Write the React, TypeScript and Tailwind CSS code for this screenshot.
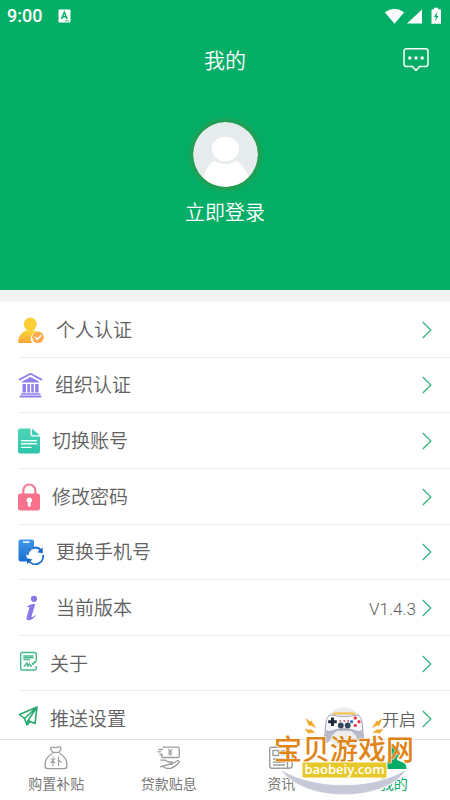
import React from "react";

type RowProps = { icon: React.ReactNode; label: string; value?: string };

const UserIcon = () => (
  <svg width="26" height="28" viewBox="0 0 26 28" aria-hidden="true">
    <defs>
      <linearGradient id="userFill" x1="0" y1="0" x2="0" y2="1">
        <stop offset="0" stopColor="#fdd835" />
        <stop offset="1" stopColor="#fba53c" />
      </linearGradient>
    </defs>
    <path d="M1.6 27C.5 27 0 26.400.1 25.400C.8 19.500 4.200 15.400 9 14.200H15.500C17 14.600 18 15 19 15.700A6.800 6.800 0 0 0 14.600 27Z" fill="url(#userFill)" />
    <ellipse cx="12.300" cy="8.300" rx="6.400" ry="6.800" fill="#fdcf36" />
    <circle cx="20" cy="21.300" r="5.800" fill="#fba94a" />
    <path d="M17.200 21.300L19.400 23.400L23 19.500" fill="none" stroke="#fff" strokeWidth="1.500" strokeLinecap="round" strokeLinejoin="round" />
  </svg>
);

const BankIcon = () => (
  <svg width="25" height="26" viewBox="0 0 25 26" fill="#8f80ea" aria-hidden="true">
    <path d="M1.500 7.600L12.500 1.800L23.500 7.600" fill="none" stroke="#8f80ea" strokeWidth="1.800" strokeLinecap="round" strokeLinejoin="round" />
    <path d="M4 9.600L12.500 5L21 9.600V10.600H4Z" />
    <path d="M4.500 12H8V20.500H4.500ZM9.300 12H11.900V20.500H9.300ZM13.200 12H15.800V20.500H13.200ZM17.100 12H20.600V20.500H17.100Z" />
    <rect x="3" y="21.200" width="19.500" height="1.500" />
    <rect x="1.500" y="23.500" width="22" height="1.900" rx=".8" />
  </svg>
);

const DocumentIcon = () => (
  <svg width="22" height="26" viewBox="0 0 22 26" aria-hidden="true">
    <defs>
      <linearGradient id="docFill" x1="0" y1="0" x2="0" y2="1">
        <stop offset="0" stopColor="#4fd5b8" />
        <stop offset="1" stopColor="#2ec3aa" />
      </linearGradient>
    </defs>
    <path d="M2 .5H12.500V6.500Q12.500 8.500 14.500 8.500H22V23.500Q22 25.500 20 25.500H2Q0 25.500 0 23.500V2.500Q0 .5 2 .5Z" fill="url(#docFill)" />
    <path d="M14 .8L21.700 7.200H15.200Q14 7.200 14 6Z" fill="#3fceb2" />
    <path d="M3.500 12.700H18.500M3.500 15.800H18.500M3.500 19.400H13" stroke="#e9fffa" strokeWidth="1.400" strokeLinecap="round" />
  </svg>
);

const LockIcon = () => (
  <svg width="22" height="28" viewBox="0 0 22 28" aria-hidden="true">
    <path d="M5.300 12V7.500A6 6 0 0 1 17.300 7.500V12" fill="none" stroke="#ef7d95" strokeWidth="2.200" />
    <rect x="0" y="10.500" width="22" height="17" rx="2.500" fill="#f7708c" />
    <circle cx="11.300" cy="17.200" r="2.700" fill="#fff" />
    <path d="M10 18H12.600L13 23Q11.300 24.300 9.700 23Z" fill="#fff" />
  </svg>
);

const PhoneSwapIcon = () => (
  <svg width="26" height="26" viewBox="0 0 26 26" aria-hidden="true">
    <defs>
      <linearGradient id="phoneFill" x1="0" y1="0" x2="0" y2="1">
        <stop offset="0" stopColor="#3f97ec" />
        <stop offset="1" stopColor="#1e6fcf" />
      </linearGradient>
    </defs>
    <rect x=".5" y=".5" width="15.500" height="22" rx="2" fill="url(#phoneFill)" />
    <rect x="5" y="2.300" width="6.500" height="1.500" fill="#fff" />
    <circle cx="16.800" cy="16.500" r="8.400" fill="#fff" />
    <g fill="none" stroke="#2476d2" strokeWidth="2">
      <path d="M9.500 16A7.700 7.700 0 0 1 23.500 12" />
      <path d="M25 16A7.900 7.900 0 0 1 10.500 21.500" />
    </g>
    <path d="M24.700 8.500V14.200L19.200 13.300ZM9 25V19.300L14.500 20.500Z" fill="#1765c0" />
  </svg>
);

const InfoIcon = () => (
  <svg width="26" height="26" viewBox="0 0 26 26" fill="#8a75ea" aria-hidden="true">
    <circle cx="16" cy="3.800" r="3.100" />
    <path d="M9 11.500Q12.500 9 17.300 8.800L13.600 21.200Q13.300 22.600 14.800 21.900L17.300 20L17.600 20.800Q13.700 25.500 10.200 25.300Q8 25 8.700 21.900L11.500 12.500Q11.700 11.500 9 12.200Z" />
  </svg>
);

const AboutIcon = () => (
  <svg width="20" height="26" viewBox="0 0 20 26" fill="none" stroke="#45b98a" strokeWidth="1.400" aria-hidden="true">
    <path d="M18.300 9V3Q18.300 1.500 16.800 1.500H4.200Q2.700 1.500 2.700 3V17.500Q2.700 19 4.200 19H16.800Q18.300 19 18.300 17.500V15" />
    <path d="M5.300 5H15.500M5.300 6.800H15.500M5.300 8.600H12" />
    <path d="M6 15.500L9 12L9.800 15L11.500 13L12.500 15H14" />
    <path d="M14.200 13.500L18.500 9.600" strokeWidth="1.800" />
  </svg>
);

const PlaneIcon = () => (
  <svg width="20" height="28" viewBox="0 0 20 28" fill="none" stroke="#27a970" strokeWidth="1.600" strokeLinejoin="round" aria-hidden="true">
    <path d="M19 2L1.500 9.500L6.500 13.500L19 2L17 18.500L10 15.500Z" />
    <path d="M6.500 13.500L9 20L10 15.500M9 20L12 16.600" />
  </svg>
);

const Chevron = () => (
  <svg width="10" height="18" viewBox="0 0 10 18" fill="none" stroke="#3db785" strokeWidth="1.400" aria-hidden="true">
    <path d="M.8 1L8.800 9L.8 17" />
  </svg>
);

const rows: RowProps[] = [
  { icon: <UserIcon />, label: "个人认证" },
  { icon: <BankIcon />, label: "组织认证" },
  { icon: <DocumentIcon />, label: "切换账号" },
  { icon: <LockIcon />, label: "修改密码" },
  { icon: <PhoneSwapIcon />, label: "更换手机号" },
  { icon: <InfoIcon />, label: "当前版本", value: "V1.4.3" },
  { icon: <AboutIcon />, label: "关于" },
  { icon: <PlaneIcon />, label: "推送设置", value: "开启" },
];

function Row({ icon, label, value }: RowProps) {
  return (
    <li className="ml-[18px] flex border-b border-[#ededed]">
      <button type="button" className="flex flex-1 items-center pt-px pr-[18px] text-left font-[350] text-[#606060]">
        {icon}
        <span className="ml-3 flex-1 pt-0.5 text-[19px] leading-6">{label}</span>
        {value && <span className="mr-1.5 pt-0.5 text-[17px] leading-6">{value}</span>}
        <Chevron />
      </button>
    </li>
  );
}

const BagIcon = () => (
  <svg width="26" height="24" viewBox="0 0 26 24" fill="none" stroke="#9b9d9d" strokeWidth="1.300" aria-hidden="true">
    <path d="M9.500 6.300C8.500 4 7.200 3 8 1.500C9.500 .3 10.500 1.900 12.300 1.700C14 1.600 15.500 .2 17.600 1.200C19 2.500 17 4 16.300 6.300Z" strokeLinejoin="round" />
    <path d="M9.500 7.500C5.500 9.500 2 14 2 19.500Q2 22.700 5 22.700H21Q24 22.700 24 19.500C24 14 20.500 9.500 16.500 7.500" />
    <path d="M9.700 10.500L10.700 11.700M7.500 13H11.500L7.500 17M10 14.500V20M10.300 15.500L12 17M15.500 10.500V20M15.500 14L18.500 16.500" strokeWidth="1.100" />
  </svg>
);

const LoanIcon = () => (
  <svg width="26" height="24" viewBox="0 0 26 24" fill="none" stroke="#9b9d9d" strokeWidth="1.300" strokeLinejoin="round" aria-hidden="true">
    <path d="M6.500 1.200H22Q23.200 1.200 23.200 2.400V10.500Q23.200 11.500 22 11.500H7Q5.700 11.500 5.700 10.300V8.500M2.500 3.500H7M1.500 5.800H5M3.500 8.500H7" />
    <path d="M12.200 3L14.200 5.500L16.200 3M14.200 5.500V10M12 6H16.500M12 8H16.500" strokeWidth="1.100" />
    <path d="M4.500 14.200H9L12.500 16H16Q17.500 17.500 15.700 18.300H11.500M16.500 17.500L21.500 14.700Q24 14.500 23 16.500Q19.500 20.500 15 22.300H10L7.500 20.700H4.500Z" />
  </svg>
);

const NewsIcon = () => (
  <svg width="26" height="24" viewBox="0 0 26 24" fill="none" stroke="#9b9d9d" strokeWidth="1.400" aria-hidden="true">
    <path d="M19.500 21.500V3Q19.500 1.200 17.700 1.200H3.500Q1.700 1.200 1.700 3V20Q1.700 22.300 4 22.300H21Q24.200 22.300 24.200 19.500V7H19.500" />
    <rect x="5" y="4.500" width="5.500" height="5" />
    <path d="M13 5H17M13 8.500H17M5 13H17M5 16H17M5 19H17" />
  </svg>
);

const MeIcon = () => (
  <svg width="26" height="24" viewBox="0 0 26 24" fill="#06ad66" aria-hidden="true">
    <ellipse cx="13" cy="6.500" rx="5.600" ry="6.200" />
    <path d="M10 11H16V14L23 17Q25.500 18.500 25.500 23H.5Q.5 18.500 3 17L10 14Z" />
  </svg>
);

const tabs = [
  { label: "购置补贴", icon: <BagIcon /> },
  { label: "贷款贴息", icon: <LoanIcon /> },
  { label: "资讯", icon: <NewsIcon /> },
  { label: "我的", icon: <MeIcon />, active: true },
];

const Bolts = () => (
  <path d="M34 14.500L38.300 18.200L39 16.800L43.500 23.500L38 20.800L37.300 22.200ZM33 25L37.700 26.200L38.300 25.200L43 28.500L37.700 28.500L37 29.800Z" fill="#f2a51f" stroke="#f2a51f" strokeWidth=".5" />
);

function SiteBadge() {
  return (
    <svg className="pointer-events-none absolute right-[34px] bottom-0" width="144" height="96" viewBox="0 0 144 96" role="img" aria-label="宝贝游戏网 baobeiy.com">
      <circle cx="72" cy="23" r="19.500" fill="#ececec" />
      <path d="M8 65C42 86 101 86 135 65C117 97 34 102 8 65Z" fill="#c7c9d9" stroke="#fff" strokeWidth="1" />
      <path d="M61 10.500Q63 8.500 68 9.500H76Q81 8.500 83 10.500" fill="none" stroke="#f2bd47" strokeWidth="2" />
      <path d="M54.500 18L52 31Q50.500 38 54.500 39Q58 38 60.500 31L65 27H79L83.500 31Q86 38 89.500 39Q93.500 38 92 31L89.500 18Z" fill="#b9bbcb" />
      <path d="M60 11Q56 11 54.500 16L53 26Q56 29 60 27Q72 22.500 84 27Q88 29 91 26L89.500 16Q88 11 84 11Q79 12.500 72 12.500Q65 12.500 60 11Z" fill="#f5f5fb" stroke="#9c9fb5" strokeWidth=".9" />
      <circle cx="60.500" cy="17.700" r="5.800" fill="#fff" />
      <path d="M60.500 13.500V22M56.200 17.700H64.800" stroke="#1f2c3d" strokeWidth="3" />
      <circle cx="83.300" cy="17.700" r="5.800" fill="#fff" />
      <circle cx="83.300" cy="14" r="1.700" fill="#e23f50" />
      <circle cx="83.300" cy="21.400" r="1.700" fill="#e23f50" />
      <circle cx="79.600" cy="17.700" r="1.700" fill="#4178c5" />
      <circle cx="87" cy="17.700" r="1.700" fill="#e23f50" />
      <circle cx="68.800" cy="21.500" r="2.900" fill="#344759" />
      <circle cx="75.700" cy="21.500" r="2.900" fill="#344759" />
      <path d="M67.500 17H69M71.500 17H73M75.500 17H77" stroke="#d23c4b" strokeWidth="1.500" />
      <Bolts />
      <g transform="matrix(-1 0 0 1 144 0)"><Bolts /></g>
      <text x="2" y="56" fontSize="28" fontWeight="500" fontFamily="'Noto Sans CJK SC', sans-serif" fill="#e18418" stroke="#fff" strokeWidth="1" strokeLinejoin="round" paintOrder="stroke">宝贝游戏网</text>
      <rect x="30" y="58" width="85" height="16" fill="#e8c829" stroke="#fff" strokeWidth="1" />
      <text x="72.500" y="70" textAnchor="middle" fontSize="13" fontWeight="600" fontFamily="'Open Sans', sans-serif" fill="#fff">baobeiy.com</text>
    </svg>
  );
}

export default function App() {
  return (
    <div className="relative flex min-h-screen flex-col overflow-hidden bg-white font-[Roboto,'Noto_Sans_CJK_SC',sans-serif]">
      <header className="bg-[#04ae66] pb-[63px] text-white">
        <div className="flex h-8 items-center pr-2 pl-[7px]">
          <span className="text-[18px] leading-6 font-medium">9:00</span>
          <svg className="ml-4" width="13" height="14" viewBox="0 0 13 14" aria-hidden="true">
            <rect x=".5" y=".5" width="12" height="13" rx="1" fill="#fff" />
            <path d="M3.500 10L6.300 3.200L9.200 10M4.600 7.800H8" fill="none" stroke="#04ae66" strokeWidth="1.500" />
            <path d="M7 11.800H11" stroke="#04ae66" strokeWidth=".8" />
          </svg>
          <svg className="ml-auto" width="58" height="18" viewBox="0 0 58 18" fill="#fff" aria-hidden="true">
            <path d="M.8 5.200Q10.500-1.800 20.200 5.200L10.500 16.700Z" />
            <path d="M23 16.500L38 2.500V16.500Z" />
            <path d="M49 2.300H50V.8H54V2.300H55.500Q57 2.300 57 3.500V16.700H47.500V3.500Q47.500 2.300 49 2.300Z" />
            <path d="M53.500 4.500L50 10H52L51 14.500L54.500 9H52.600Z" fill="#04ae66" />
          </svg>
        </div>
        <div className="grid h-14 grid-cols-[1fr_auto_1fr] items-center">
          <h1 className="col-start-2 pt-0.5 text-[21px] leading-7 font-[350]">我的</h1>
          <button type="button" aria-label="消息" className="mr-5 justify-self-end">
            <svg width="28" height="26" viewBox="0 0 28 26" fill="none" stroke="#fff" strokeWidth="1.500" strokeLinejoin="round" aria-hidden="true">
              <path d="M4.500 1.800H23.500Q26 1.800 26 4.300V17Q26 19.500 23.500 19.500H17.500L14 23.500L10.500 19.500H4.500Q2 19.500 2 17V4.300Q2 1.800 4.500 1.800Z" />
              <g fill="#fff" stroke="none">
                <circle cx="7.800" cy="11" r="1.700" />
                <circle cx="14" cy="11" r="1.700" />
                <circle cx="20.200" cy="11" r="1.700" />
              </g>
            </svg>
          </button>
        </div>
        <button type="button" className="mx-auto mt-[34px] flex flex-col items-center">
          <svg className="rounded-full shadow-[0_0_6px_1px_#4c8a3a]" width="65" height="65" viewBox="0 0 65 65" aria-hidden="true">
            <defs>
              <clipPath id="face"><circle cx="32.500" cy="32.500" r="32.500" /></clipPath>
            </defs>
            <g clipPath="url(#face)">
              <rect width="65" height="65" fill="#e6ebed" />
              <path d="M10 56Q13 44 21.500 38.500Q32.500 46 43.500 38.500Q52 44 56 56L48 65H17Z" fill="#fff" />
              <ellipse cx="32.500" cy="27" rx="13.700" ry="12.300" fill="#fff" />
            </g>
          </svg>
          <span className="mt-3 text-[20px] leading-7 font-[350]">立即登录</span>
        </button>
      </header>

      <main className="flex flex-1 flex-col border-t-12 border-[#f3f3f3]">
        <ul className="grid flex-1 auto-rows-fr">
          {rows.map((row) => (
            <Row key={row.label} {...row} />
          ))}
        </ul>
      </main>

      <nav className="relative -mt-2 grid grid-cols-4 border-t border-[#e4e4e4] bg-white">
        {tabs.map((tab) => (
          <a key={tab.label} href="#" aria-current={tab.active ? "page" : undefined} className={`flex flex-col items-center py-1.5 ${tab.active ? "text-[#06ad66]" : "text-[#777]"}`}>
            {tab.icon}
            <span className="mt-1 text-[14px] leading-5">{tab.label}</span>
          </a>
        ))}
      </nav>
      <SiteBadge />
    </div>
  );
}
